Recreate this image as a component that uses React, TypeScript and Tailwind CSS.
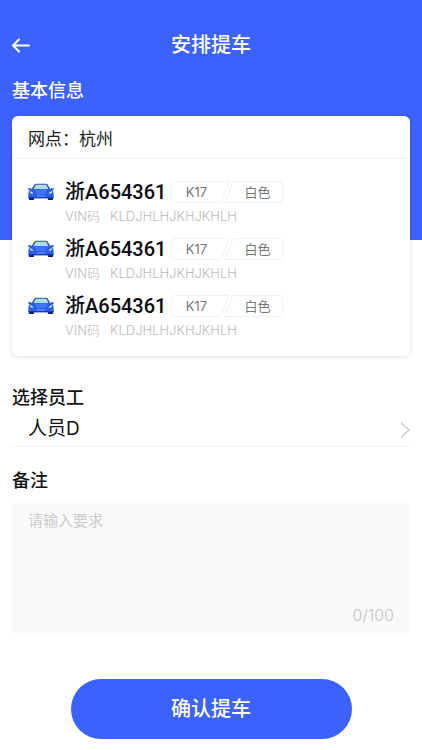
import React, { useState } from 'react';

interface Vehiculo {
    id: number;
    placa: string;
    vin: string;
    modelo: string;
    color: string;
}

const vehiculos: Vehiculo[] = [
    { id: 1, placa: 'A654361', vin: 'KLDJHLHJKHJKHLH', modelo: 'K17', color: '白色' },
    { id: 2, placa: 'A654361', vin: 'KLDJHLHJKHJKHLH', modelo: 'K17', color: '白色' },
    { id: 3, placa: 'A654361', vin: 'KLDJHLHJKHJKHLH', modelo: 'K17', color: '白色' },
];

const MAX_REMARK = 100;

function CarIcon() {
    return (
        <svg width="26" height="18" viewBox="0 0 26 18" className="shrink-0" aria-hidden="true">
            <path d="M.8 12h5.400v4q0 1-1 1H1.800q-1 0-1-1zM19.800 12h5.400v4q0 1-1 1h-3.400q-1 0-1-1z" fill="#0d1a5c" />
            <path d="M3 7 6.400 1.500Q6.800.8 7.800.8h10.400q1 0 1.400.7L23 7z" fill="#35589c" />
            <path d="M5.200 6.400 7.500 2.300Q7.800 1.700 8.400 1.700h9.200q.6 0 .9.600l2.300 4.100z" fill="#a9dfe8" />
            <path d="M0 5.300h2.600q.8 0 .8.900v1H1.500Q.2 7 0 5.300zM26 5.300h-2.600q-.8 0-.8.900v1h1.900q1.300-.2 1.500-1.900z" fill="#2450d8" />
            <path d="M3.600 6h18.800q3.200 1.500 3.200 4.500v3.500q0 1.300-1.400 1.300H1.800Q.4 15.300.4 14v-3.500Q.4 7.500 3.600 6z" fill="#2a5fec" />
            <path d="M6.500 6.500h13l-2.300 4.500H8.800z" fill="#3f74f8" />
            <path d="M9 12.400h8v1.200H9z" fill="#6f98fb" />
            <path d="M.4 13.900h25.200q0 1.400-1.400 1.400H1.800Q.4 15.300.4 13.900z" fill="#1a39b8" />
            <path d="M1.800 8.200q2.900.2 3.500 2.500-3.300.2-3.500-2.500zM24.200 8.200q-2.900.2-3.500 2.500 3.300.2 3.500-2.500z" fill="#d6f6ff" />
        </svg>
    );
}

function Tags({ modelo, color }: { modelo: string; color: string }) {
    return (
        <div className="flex h-[22px] text-[13px] leading-5 text-[#777]">
            <span className="w-[50px] rounded-l border border-r-0 border-[#f2f2f2] text-center">{modelo}</span>
            <svg width="12" height="22" viewBox="0 0 12 22" fill="none" stroke="#f0f0f0" aria-hidden="true">
                <path d="M0 .5h8L0 21.500M12 .5 4 21.500h8" />
            </svg>
            <span className="w-[50px] rounded-r border border-l-0 border-[#f2f2f2] text-center">{color}</span>
        </div>
    );
}

export default function App() {
    const [empleado, setEmpleado] = useState('D');
    const [remark, setRemark] = useState('');

    return (
        <div className="min-h-screen bg-white pb-3 font-['Inter','Noto_Sans_CJK_SC',sans-serif] text-[#111]">
            {/* Header */}
            <header className="h-60 bg-[#3b61ff] px-3 pt-[29px] text-white">
                <div className="grid grid-cols-[20px_1fr_20px] items-center">
                    <button type="button" aria-label="返回" className="flex h-8 items-center">
                        <svg width="20" height="16" viewBox="0 0 20 16" fill="none" stroke="currentColor" strokeWidth="2" strokeLinecap="round" strokeLinejoin="round" aria-hidden="true">
                            <path d="M17 8.500H1.200M7 2.500l-6 6 6 6" />
                        </svg>
                    </button>
                    <h1 className="text-center text-xl leading-8 font-medium">安排提车</h1>
                </div>
                <h2 className="mt-4 text-lg leading-7 font-medium">基本信息</h2>
            </header>

            <main className="-mt-[124px] px-3">
                {/* Vehicles */}
                <section className="rounded-md bg-white pb-[7px] shadow-[0_1px_4px_rgba(0,0,0,0.12)]">
                    <p className="border-b border-[#f2f2f2] px-4 pt-2.5 pb-1.5 text-[17px] leading-[26px] text-[#222]">网点：杭州</p>
                    <ul className="pt-[19px]">
                        {vehiculos.map((v) => (
                            <li key={v.id} className="flex h-[57px] gap-[11px] px-4">
                                <div className="pt-[5px]">
                                    <CarIcon />
                                </div>
                                <div>
                                    <div className="flex items-center">
                                        <span className="w-[106px] font-['Roboto','Noto_Sans_CJK_SC',sans-serif] text-xl leading-7 font-medium whitespace-nowrap text-[#0b0b14]">
                                            浙{v.placa}
                                        </span>
                                        <Tags modelo={v.modelo} color={v.color} />
                                    </div>
                                    <p className="flex gap-2.5 text-[13px] leading-5 font-light text-[#bbb]">
                                        <span>VIN码</span>
                                        <span>{v.vin}</span>
                                    </p>
                                </div>
                            </li>
                        ))}
                    </ul>
                </section>

                {/* Staff */}
                <section className="mt-7">
                    <label htmlFor="staff" className="block text-lg leading-7 font-medium">选择员工</label>
                    <div className="relative border-b border-[#f2f2f2]">
                        <select
                            id="staff"
                            value={empleado}
                            onChange={(e) => setEmpleado(e.target.value)}
                            className="block h-[34px] w-full appearance-none bg-transparent px-4 text-[19px] outline-none"
                        >
                            <option value="A">人员A</option>
                            <option value="B">人员B</option>
                            <option value="C">人员C</option>
                            <option value="D">人员D</option>
                        </select>
                        <svg width="10" height="16" viewBox="0 0 10 16" fill="none" stroke="#c8c8c8" strokeWidth="1.400" className="pointer-events-none absolute top-2.5 right-0" aria-hidden="true">
                            <path d="M1 .8 9 8l-8 7.200" />
                        </svg>
                    </div>
                </section>

                {/* Remarks */}
                <section className="mt-5">
                    <label htmlFor="remark" className="block text-lg leading-7 font-medium">备注</label>
                    <div className="relative mt-2">
                        <textarea
                            id="remark"
                            value={remark}
                            maxLength={MAX_REMARK}
                            onChange={(e) => setRemark(e.target.value)}
                            placeholder="请输入要求"
                            className="block h-[130px] w-full resize-none bg-[#f9f9f9] px-4 py-2 text-[15px] leading-5 outline-none placeholder:text-[#ccc]"
                        />
                        <span className="absolute right-4 bottom-2 text-base leading-5 font-light text-[#c4c4c4]">
                            {remark.length}/{MAX_REMARK}
                        </span>
                    </div>
                </section>

                <button type="button" className="mx-auto mt-[46px] block h-[60px] w-2/3 min-w-[281px] rounded-full bg-[#3b61ff] text-xl font-medium text-white">
                    确认提车
                </button>
            </main>
        </div>
    );
}
